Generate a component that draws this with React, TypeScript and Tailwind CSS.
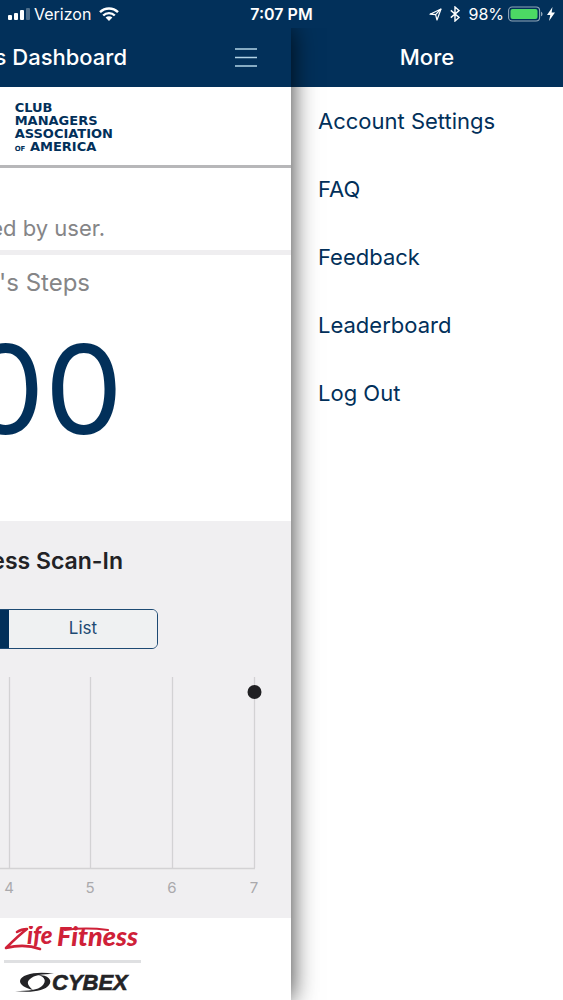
import type { ReactNode } from 'react'

const menuItems = ['Account Settings', 'FAQ', 'Feedback', 'Leaderboard', 'Log Out']

const days = [
  { label: '4', x: 9 },
  { label: '5', x: 90 },
  { label: '6', x: 172 },
  { label: '7', x: 254 },
]

export default function App() {
  return (
    <div className="flex min-h-screen flex-col overflow-hidden bg-white font-['Inter',sans-serif] text-[#02305a]">
      <StatusBar />
      <div className="flex flex-1">
        <Dashboard />
        <MoreMenu />
      </div>
    </div>
  )
}

function StatusBar() {
  return (
    <div className="relative z-20 grid h-7 grid-cols-[1fr_auto_1fr] items-center bg-[#02305a] px-2 text-white">
      <div className="flex items-center gap-1">
        <svg className="h-3 w-[22px]" viewBox="0 0 22 12" fill="currentColor">
          <rect x="0" y="7" width="4" height="5" rx="1" />
          <rect x="6" y="5" width="4" height="7" rx="1" />
          <rect x="12" y="2" width="4" height="10" rx="1" />
          <rect x="18" y="0" width="4" height="12" rx="1" opacity="0.3" />
        </svg>
        <span className="text-base">Verizon</span>
        <svg className="ml-1 h-[14px] w-5" viewBox="0 0 20 14">
          <g fill="none" stroke="currentColor" strokeWidth="2.4">
            <path d="M1 5.2a12.8 12.8 0 0 1 18 0" />
            <path d="M4.2 8.5a8.2 8.2 0 0 1 11.6 0" />
          </g>
          <path d="M10 14 6.6 10.6a4.8 4.8 0 0 1 6.8 0z" fill="currentColor" />
        </svg>
      </div>
      <span className="text-base font-semibold">7:07 PM</span>
      <div className="flex items-center justify-end">
        <svg className="h-[13px] w-[13px]" viewBox="0 0 13 13" fill="none" stroke="currentColor" strokeWidth="1.2" strokeLinejoin="round">
          <path d="M12 1 1 6.2l5.6.4L8 12z" />
          <path d="M12 1 6.6 6.6" />
        </svg>
        <svg className="ml-2 h-4 w-[10px]" viewBox="0 0 10 16" fill="none" stroke="currentColor" strokeWidth="1.4">
          <path d="M.8 4.4 9 11.4 5 15V1l4 3.6-8.2 7" />
        </svg>
        <span className="ml-2 text-base">98%</span>
        <svg className="ml-1 h-4 w-[35px]" viewBox="0 0 35 16">
          <rect x="0.6" y="1" width="31" height="14" rx="3.5" fill="none" stroke="#8fa5b8" strokeWidth="1.1" />
          <rect x="2.5" y="3" width="27" height="10" rx="2" fill="#4cd964" />
          <path d="M33 5.7c2 .7 2 3.9 0 4.6z" fill="#8fa5b8" />
        </svg>
        <svg className="ml-1 h-[14px] w-2" viewBox="0 0 8 14" fill="currentColor">
          <path d="M5.5 0 0 8h3.3L2 14l6-8.5H4.6z" />
        </svg>
      </div>
    </div>
  )
}

function Dashboard() {
  return (
    <main className="relative z-10 flex min-w-0 flex-1 flex-col bg-white shadow-[0_0_24px_rgba(0,0,0,0.8)]">
      <header className="flex h-[59px] items-center justify-end overflow-hidden bg-[#02305a] pr-[33px] text-white">
        <h1 className="whitespace-nowrap text-[22px] font-medium">s Dashboard</h1>
        <button type="button" aria-label="Menu" className="ml-[107px] shrink-0">
          <svg className="h-5 w-6" viewBox="0 0 24 20" stroke="#b3d3e6" strokeWidth="1.6">
            <path d="M1 1h22M1 9.5h22M1 18h22" />
          </svg>
        </button>
      </header>

      <section className="flex h-[81px] justify-end overflow-hidden border-b-[3px] border-[#b7b7b9] pt-[14px] pr-[178px]">
        <div className="whitespace-nowrap font-['DejaVu_Sans',sans-serif] text-[13px] leading-[13px] font-bold">
          <p>CLUB</p>
          <p>MANAGERS</p>
          <p>ASSOCIATION</p>
          <p>
            <span className="text-[7px]">OF</span> AMERICA
          </p>
        </div>
      </section>

      <section className="flex h-[87px] items-end justify-end overflow-hidden border-b-[5px] border-[#efeef0] pr-[186px] pb-2 text-[#858587]">
        <p className="whitespace-nowrap text-[22px] leading-7">ed by user.</p>
      </section>

      <section className="flex h-[266px] flex-col items-end overflow-hidden pt-3">
        <h2 className="pr-[201px] text-2xl leading-8 whitespace-nowrap text-[#858587]">'s Steps</h2>
        <p className="pt-[27px] pr-[168px] text-[124px] leading-[126px]">00</p>
      </section>

      <section className="flex h-[397px] flex-col items-end overflow-hidden bg-[#f0eff1] pt-6">
        <h2 className="pr-[168px] text-[23px] leading-8 font-semibold whitespace-nowrap text-[#222225]">ess Scan-In</h2>
        <div className="mt-8 mr-[133px] flex h-10 shrink-0 overflow-hidden rounded-md border border-[#1d4a73]">
          <button type="button" aria-label="Graph" aria-pressed="true" className="w-[148px] bg-[#02305a]" />
          <SegmentButton>List</SegmentButton>
        </div>
        <ScanChart />
      </section>

      <footer className="flex flex-1 flex-col items-end overflow-hidden bg-white pt-2 pr-[150px] pb-1">
        <LifeFitnessLogo />
        <hr className="mt-1 w-[137px] border-t-[3px] border-[#dfe0e2]" />
        <CybexLogo />
      </footer>
    </main>
  )
}

function SegmentButton({ children }: { children: ReactNode }) {
  return (
    <button type="button" className="w-[148px] bg-[#eff1f2] text-[17px] text-[#1d4a73]">
      {children}
    </button>
  )
}

function ScanChart() {
  return (
    <svg className="mt-7 h-[224px] w-[291px] shrink-0" viewBox="0 0 291 224" role="img" aria-label="Scan-ins by day">
      <g stroke="#d3d2d4" strokeWidth="1.3">
        {days.map((day) => (
          <line key={day.label} x1={day.x + 0.5} x2={day.x + 0.5} y1="0" y2="191" />
        ))}
        <line x1="0" x2="255" y1="191.5" y2="191.5" />
      </g>
      <circle cx="254.5" cy="15" r="7" fill="#202023" />
      <g fill="#aaa9ac" fontSize="15" textAnchor="middle">
        {days.map((day) => (
          <text key={day.label} x={day.x} y="216">
            {day.label}
          </text>
        ))}
      </g>
    </svg>
  )
}

function LifeFitnessLogo() {
  return (
    <svg className="h-[30px] w-[140px] shrink-0" viewBox="0 0 140 30" role="img" aria-label="Life Fitness">
      <g fill="none" stroke="#cf2138" strokeLinecap="round" strokeLinejoin="round">
        <path d="M16 6c3-2 6-3 10-3C18 9 11 16 5 22c12-3 23-3 34 1" strokeWidth="2.6" />
        <path d="M64 4c14-2 28-2 43 0" strokeWidth="2" />
      </g>
      <g fill="#cf2138" fontFamily="Lato, sans-serif" fontWeight="900" fontStyle="italic">
        <text x="26" y="18" fontSize="24">
          ife
        </text>
        <text x="56" y="20" fontSize="27">
          Fitness
        </text>
      </g>
    </svg>
  )
}

function CybexLogo() {
  return (
    <svg className="mt-2 h-6 w-[131px] shrink-0" viewBox="0 0 131 24" role="img" aria-label="Cybex">
      <g fill="#232326">
        <path d="M44 3C28 0 11 3 10 10c0 4 5 7 13 9-5-4-7-8-3-11C24 4 32 3 44 3z" />
        <path d="M28 4c10 0 15 5 11 10-4 6-18 8-34 6 14 0 23-1 27-5 5-5 3-9-4-11z" />
      </g>
      <text
        x="42"
        y="19"
        fill="#232326"
        stroke="#232326"
        strokeWidth="0.6"
        fontFamily="'Liberation Sans', sans-serif"
        fontSize="22"
        fontWeight="700"
        fontStyle="italic"
      >
        CYBEX
      </text>
    </svg>
  )
}

function MoreMenu() {
  return (
    <aside className="flex w-[272px] shrink-0 flex-col bg-white">
      <header className="flex h-[59px] items-center justify-center bg-[#02305a] text-white">
        <h2 className="text-[22px] font-medium">More</h2>
      </header>
      <nav className="flex flex-col">
        {menuItems.map((item) => (
          <a key={item} href="#" className="flex h-[68px] items-center px-[27px] text-[22px]">
            {item}
          </a>
        ))}
      </nav>
    </aside>
  )
}
